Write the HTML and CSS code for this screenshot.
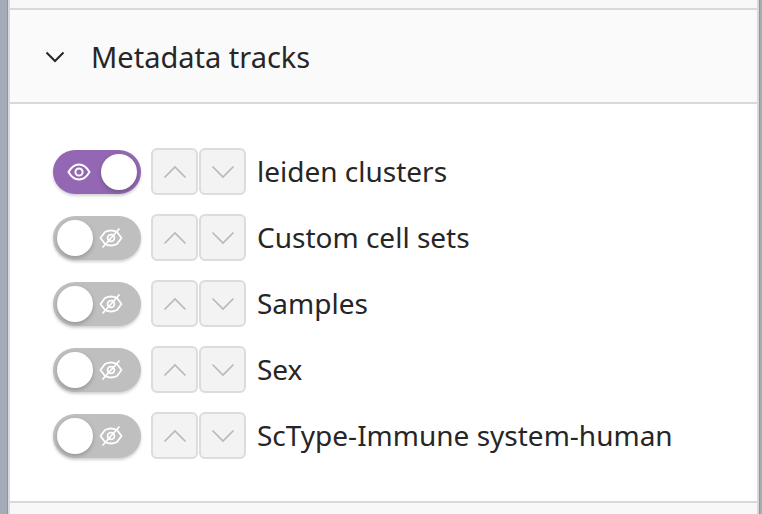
FILE: index.html
```html
<!DOCTYPE html>
<html>
<head>
<meta charset="utf-8">
<link rel="stylesheet" href="styles.css">
</head>
<body>
<div class="panel">
  <div class="prev"></div>
  <div class="section">
    <div class="header">
      <svg class="caret" width="20" height="12" viewBox="0 0 20 12"><path d="M1.5 1.5 L10 10 L18.5 1.5" fill="none" stroke="#262626" stroke-width="2"/></svg>
      <span class="title">Metadata tracks</span>
    </div>
    <div class="content">
      <div class="row">
        <div class="switch on">
          <svg class="eye" width="24" height="18" viewBox="0 0 24 18"><path d="M1.5 9 C5 3 8.5 1.5 12 1.5 C15.5 1.5 19 3 22.5 9 C19 15 15.5 16.5 12 16.5 C8.5 16.5 5 15 1.5 9 Z" fill="none" stroke="#fff" stroke-width="2"/><circle cx="12" cy="9" r="3.6" fill="none" stroke="#fff" stroke-width="2"/></svg>
          <span class="knob"></span>
        </div>
        <div class="btns">
          <button class="arrow"><svg width="24" height="14" viewBox="0 0 24 14"><path d="M1.5 12.5 L12 2 L22.5 12.5" fill="none" stroke="#b8b8b8" stroke-width="1.6"/></svg></button>
          <button class="arrow"><svg width="24" height="14" viewBox="0 0 24 14"><path d="M1.5 1.5 L12 12 L22.5 1.5" fill="none" stroke="#b8b8b8" stroke-width="1.6"/></svg></button>
        </div>
        <span class="label">leiden clusters</span>
      </div>
      <div class="row">
        <div class="switch">
          <span class="knob"></span>
          <svg class="eye" width="24" height="22" viewBox="0 0 24 22"><path d="M1.5 11 L6 5 C8 4 10 3.5 12 3.5 C14 3.5 16 4 18 5 L22.5 11 L18 17 C16 18 14 18.5 12 18.5 C10 18.5 8 18 6 17 Z" fill="none" stroke="#fff" stroke-width="1.8" stroke-linejoin="round"/><circle cx="12" cy="11" r="3.4" fill="none" stroke="#fff" stroke-width="1.8"/><path d="M3.5 20.5 L20.5 1.5" stroke="#fff" stroke-width="1.8"/></svg>
        </div>
        <div class="btns">
          <button class="arrow"><svg width="24" height="14" viewBox="0 0 24 14"><path d="M1.5 12.5 L12 2 L22.5 12.5" fill="none" stroke="#b8b8b8" stroke-width="1.6"/></svg></button>
          <button class="arrow"><svg width="24" height="14" viewBox="0 0 24 14"><path d="M1.5 1.5 L12 12 L22.5 1.5" fill="none" stroke="#b8b8b8" stroke-width="1.6"/></svg></button>
        </div>
        <span class="label">Custom cell sets</span>
      </div>
      <div class="row">
        <div class="switch">
          <span class="knob"></span>
          <svg class="eye" width="24" height="22" viewBox="0 0 24 22"><path d="M1.5 11 L6 5 C8 4 10 3.5 12 3.5 C14 3.5 16 4 18 5 L22.5 11 L18 17 C16 18 14 18.5 12 18.5 C10 18.5 8 18 6 17 Z" fill="none" stroke="#fff" stroke-width="1.8" stroke-linejoin="round"/><circle cx="12" cy="11" r="3.4" fill="none" stroke="#fff" stroke-width="1.8"/><path d="M3.5 20.5 L20.5 1.5" stroke="#fff" stroke-width="1.8"/></svg>
        </div>
        <div class="btns">
          <button class="arrow"><svg width="24" height="14" viewBox="0 0 24 14"><path d="M1.5 12.5 L12 2 L22.5 12.5" fill="none" stroke="#b8b8b8" stroke-width="1.6"/></svg></button>
          <button class="arrow"><svg width="24" height="14" viewBox="0 0 24 14"><path d="M1.5 1.5 L12 12 L22.5 1.5" fill="none" stroke="#b8b8b8" stroke-width="1.6"/></svg></button>
        </div>
        <span class="label">Samples</span>
      </div>
      <div class="row">
        <div class="switch">
          <span class="knob"></span>
          <svg class="eye" width="24" height="22" viewBox="0 0 24 22"><path d="M1.5 11 L6 5 C8 4 10 3.5 12 3.5 C14 3.5 16 4 18 5 L22.5 11 L18 17 C16 18 14 18.5 12 18.5 C10 18.5 8 18 6 17 Z" fill="none" stroke="#fff" stroke-width="1.8" stroke-linejoin="round"/><circle cx="12" cy="11" r="3.4" fill="none" stroke="#fff" stroke-width="1.8"/><path d="M3.5 20.5 L20.5 1.5" stroke="#fff" stroke-width="1.8"/></svg>
        </div>
        <div class="btns">
          <button class="arrow"><svg width="24" height="14" viewBox="0 0 24 14"><path d="M1.5 12.5 L12 2 L22.5 12.5" fill="none" stroke="#b8b8b8" stroke-width="1.6"/></svg></button>
          <button class="arrow"><svg width="24" height="14" viewBox="0 0 24 14"><path d="M1.5 1.5 L12 12 L22.5 1.5" fill="none" stroke="#b8b8b8" stroke-width="1.6"/></svg></button>
        </div>
        <span class="label">Sex</span>
      </div>
      <div class="row">
        <div class="switch">
          <span class="knob"></span>
          <svg class="eye" width="24" height="22" viewBox="0 0 24 22"><path d="M1.5 11 L6 5 C8 4 10 3.5 12 3.5 C14 3.5 16 4 18 5 L22.5 11 L18 17 C16 18 14 18.5 12 18.5 C10 18.5 8 18 6 17 Z" fill="none" stroke="#fff" stroke-width="1.8" stroke-linejoin="round"/><circle cx="12" cy="11" r="3.4" fill="none" stroke="#fff" stroke-width="1.8"/><path d="M3.5 20.5 L20.5 1.5" stroke="#fff" stroke-width="1.8"/></svg>
        </div>
        <div class="btns">
          <button class="arrow"><svg width="24" height="14" viewBox="0 0 24 14"><path d="M1.5 12.5 L12 2 L22.5 12.5" fill="none" stroke="#b8b8b8" stroke-width="1.6"/></svg></button>
          <button class="arrow"><svg width="24" height="14" viewBox="0 0 24 14"><path d="M1.5 1.5 L12 12 L22.5 1.5" fill="none" stroke="#b8b8b8" stroke-width="1.6"/></svg></button>
        </div>
        <span class="label">ScType-Immune system-human</span>
      </div>
    </div>
  </div>
  <div class="next"></div>
</div>
</body>
</html>
```

FILE: styles.css
```css
html, body {
  margin: 0;
  padding: 0;
  height: 100%;
}
body {
  background: #a4abb9;
  font-family: "Noto Sans", "Open Sans", sans-serif;
  color: #262626;
  overflow: hidden;
}
.panel {
  margin-left: 8px;
  width: 747px;
  height: 514px;
  border-left: 2px solid #d9d9d9;
  border-right: 2px solid #d9d9d9;
  background: #f8f8f8;
  box-shadow: -1px 0 0 #8f96a4, 1px 0 0 #8f96a4;
}
.prev {
  height: 8px;
  background: #f8f8f8;
}
.section {
  border-top: 2px solid #d9d9d9;
  border-bottom: 2px solid #d9d9d9;
}
.header {
  height: 92px;
  background: #fafafa;
  border-bottom: 2px solid #d9d9d9;
  display: flex;
  align-items: center;
  padding-left: 35px;
}
.caret {
  display: block;
  margin-right: 26px;
  margin-top: 2px;
}
.title {
  font-size: 29px;
  line-height: 1;
  color: #262626;
}
.content {
  background: #fff;
  padding: 44px 0 42px 43px;
  display: flex;
  flex-direction: column;
  gap: 19px;
}
.row {
  display: flex;
  align-items: center;
  height: 47px;
}
.switch {
  width: 88px;
  height: 44px;
  border-radius: 22px;
  background: #bfbfbf;
  display: flex;
  align-items: center;
  justify-content: space-between;
  padding: 0 4px;
  box-sizing: border-box;
  box-shadow: 0 2px 3px rgba(0, 0, 0, 0.18);
}
.switch.on {
  background: #9367b3;
  padding-left: 14px;
}
.switch .eye {
  display: block;
  margin-right: 14px;
}
.switch.on .eye {
  margin-right: 0;
}
.knob {
  width: 36px;
  height: 36px;
  border-radius: 50%;
  background: #fff;
  box-shadow: 0 2px 4px rgba(0, 35, 11, 0.25);
}
.btns {
  display: flex;
  gap: 1px;
  margin-left: 10px;
}
.arrow {
  width: 47px;
  height: 47px;
  box-sizing: border-box;
  border: 2px solid #dcdcdc;
  border-radius: 6px;
  background: #f3f3f3;
  display: flex;
  align-items: center;
  justify-content: center;
  padding: 0;
}
.arrow svg {
  display: block;
}
.label {
  margin-left: 11px;
  font-size: 28px;
  line-height: 1;
  color: #262626;
  padding-bottom: 2px;
}
.next {
  height: 12px;
  background: #f8f8f8;
}
```
